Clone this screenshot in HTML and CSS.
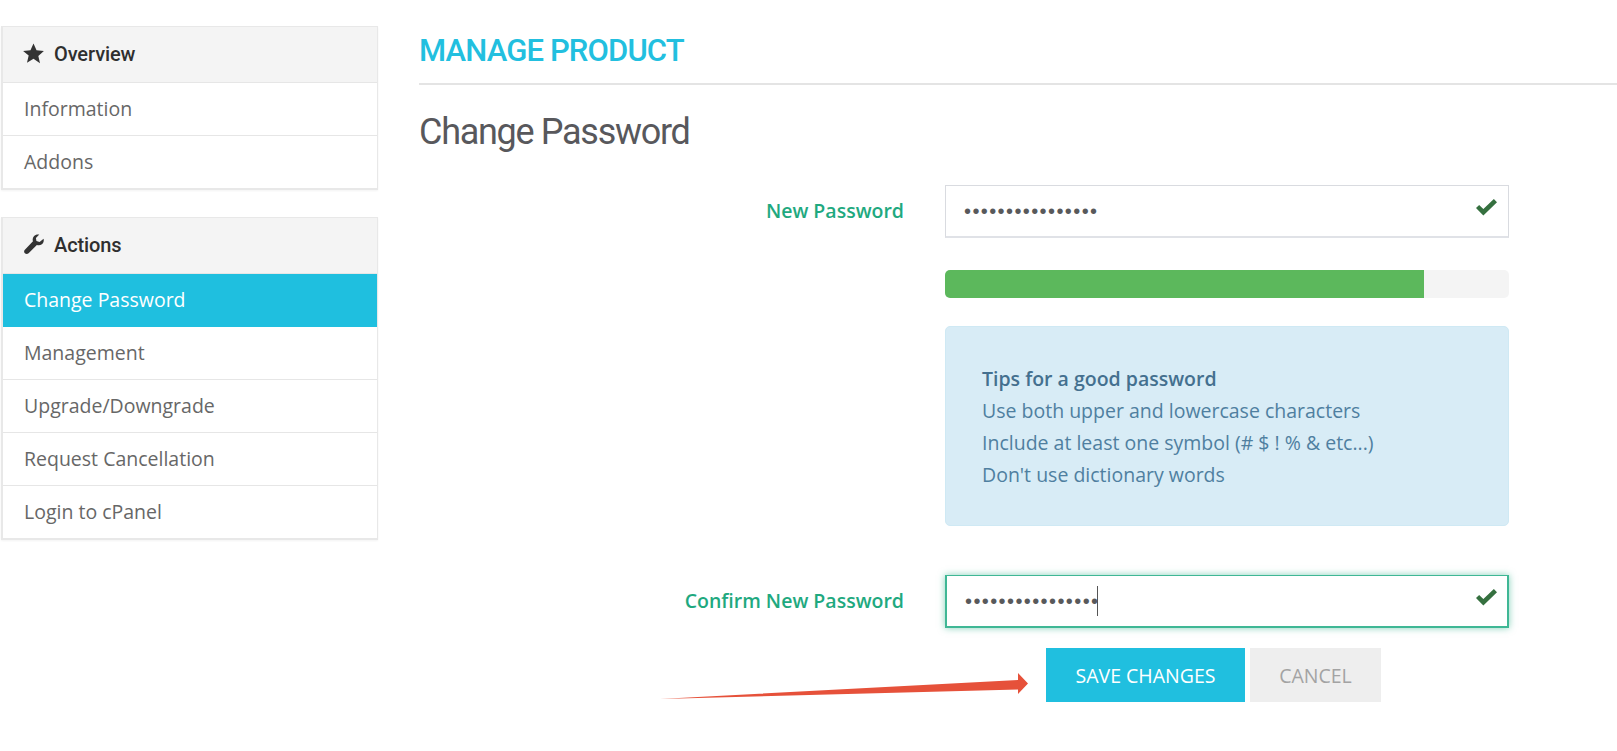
FILE: index.html
```html
<!DOCTYPE html>
<html lang="en">
<head>
  <meta charset="UTF-8" />
  <meta name="viewport" content="width=device-width, initial-scale=1" />
  <title>Manage Product</title>
  <link rel="stylesheet" href="styles.css">
</head>
<body>

  <div class="page">
    <!-- Sidebar -->
    <aside class="sidebar">
      <div class="panel">
        <div class="panel-head">
          <svg class="panel-icon" viewBox="0 0 20 20"><path d="M10 0.5l2.9 6.5 7 .7-5.3 4.6 1.6 6.9L10 15.1l-6.2 3.6 1.6-6.9L.1 7.7l7-.7z"/></svg>
          Overview
        </div>
        <a class="panel-item">Information</a>
        <a class="panel-item">Addons</a>
      </div>

      <div class="panel">
        <div class="panel-head">
          <svg class="panel-icon" viewBox="0 0 20 20"><path d="M19.6 4.6c.5 2.2-.1 4-1.600 5.200-1.400 1.100-3.100 1.300-4.800.7L5.300 18.300c-1 1-2.500 1-3.500.1-1-1-1-2.500 0-3.500l7.700-7.900c-.6-1.800-.3-3.500.9-4.900C11.600.7 13.400.1 15.500.5L12.300 3.700l.5 3 3 .9z"/></svg>
          Actions
        </div>
        <a class="panel-item active">Change Password</a>
        <a class="panel-item">Management</a>
        <a class="panel-item">Upgrade/Downgrade</a>
        <a class="panel-item">Request Cancellation</a>
        <a class="panel-item">Login to cPanel</a>
      </div>
    </aside>

    <!-- Main content -->
    <main class="content">
      <h1 class="page-title">MANAGE PRODUCT</h1>
      <h2 class="section-title">Change Password</h2>

      <form class="pw-form">
        <div class="form-row">
          <label class="form-label" for="newPassword">New Password</label>
          <div class="field">
            <input type="password" id="newPassword" class="form-input" value="1234567890123456" />
            <svg class="field-check" viewBox="0 0 20 16"><path d="M0 8.500l3-3 4 4L17 0l3 3L7 15.500z"/></svg>
          </div>
        </div>

        <div class="form-row meter-row">
          <div class="meter"><div class="meter-bar" style="width: 85%"></div></div>
        </div>

        <div class="form-row tips-row">
          <div class="tips">
            <strong>Tips for a good password</strong><br>
            Use both upper and lowercase characters<br>
            Include at least one symbol (# $ ! % &amp; etc...)<br>
            Don't use dictionary words
          </div>
        </div>

        <div class="form-row confirm-row">
          <label class="form-label" for="confirmPassword">Confirm New Password</label>
          <div class="field">
            <input type="password" id="confirmPassword" class="form-input focused" value="1234567890123456" />
            <span class="caret"></span>
            <svg class="field-check" viewBox="0 0 20 16"><path d="M0 8.500l3-3 4 4L17 0l3 3L7 15.500z"/></svg>
          </div>
        </div>

        <div class="form-actions">
          <button type="button" class="btn btn-save">SAVE CHANGES</button>
          <button type="button" class="btn btn-cancel">CANCEL</button>
        </div>
      </form>
    </main>
  </div>

  <!-- Annotation arrow drawn over the page -->
  <svg class="arrow" viewBox="0 0 370 32"><path d="M0 27L358 8V1L368 11.500 358 22V17.500z"/></svg>

</body>
</html>
```

FILE: styles.css
```css
* {
  box-sizing: border-box;
}

body {
  margin: 0;
  font-family: "Open Sans", Arial, sans-serif;
  background: #fff;
  color: #58595b;
  overflow: hidden;
}

.page {
  display: flex;
  gap: 41px;
  padding: 26px 0 0 1px;
  height: 751px;
}

/* Sidebar */
.sidebar {
  width: 377px;
  flex-shrink: 0;
}

.panel {
  border: 2px solid #e8e8e8;
  border-top-width: 1px;
  border-right-width: 1px;
  margin-bottom: 27px;
  box-shadow: 0 1px 2px rgba(0,0,0,0.05);
}

.panel-head {
  display: flex;
  align-items: center;
  gap: 10px;
  height: 56px;
  padding: 0 0 2px 20px;
  background: #f4f4f4;
  border-bottom: 1px solid #e6e6e6;
  font-family: Roboto, Arial, sans-serif;
  font-size: 20px;
  font-weight: 500;
  letter-spacing: -0.1px;
  color: #2f2f2f;
}

.panel-icon {
  width: 21px;
  height: 21px;
  fill: #333;
}

.panel-item {
  display: block;
  height: 53px;
  line-height: 52px;
  padding-left: 21px;
  font-size: 19.5px;
  color: #676767;
  border-bottom: 1px solid #e6e6e6;
}

.panel-item:last-child {
  border-bottom: none;
  height: 52px;
}

.panel-item.active {
  background: #1fbfdf;
  color: #fff;
  border-bottom: none;
}

/* Main */
.content {
  flex: 1;
  min-width: 0;
}

.page-title {
  margin: 0;
  height: 59px;
  line-height: 49px;
  font-family: Roboto, Arial, sans-serif;
  font-size: 31px;
  font-weight: 500;
  color: #22bfdf;
  letter-spacing: -0.85px;
  border-bottom: 2px solid #e4e4e4;
}

.section-title {
  margin: 0;
  height: 100px;
  padding: 23px 0 0 0;
  font-family: Roboto, Arial, sans-serif;
  font-size: 36px;
  line-height: 48px;
  font-weight: 400;
  color: #58585c;
  letter-spacing: -1.3px;
}

/* Form */
.form-row {
  display: flex;
  align-items: center;
  justify-content: flex-end;
  gap: 41px;
  width: 1090px;
}

.form-label {
  padding-bottom: 2px;
  font-size: 19.5px;
  font-weight: 600;
  color: #1fa97f;
}

.field {
  position: relative;
  width: 564px;
}

.form-input {
  display: block;
  width: 100%;
  height: 53px;
  padding: 0 18px;
  border: 1px solid #d9dbe0;
  border-bottom: 2px solid #e0e2e7;
  background: #fff;
  font-family: Arial, "Liberation Sans", sans-serif;
  font-size: 20px;
  letter-spacing: 1.4px;
  color: #58595b;
  outline: none;
}

.form-input.focused {
  border: 2px solid #3fb795;
  border-top-width: 1px;
  box-shadow: 0 0 7px rgba(31,169,127,0.55);
}

.caret {
  position: absolute;
  left: 152px;
  top: 11px;
  width: 1px;
  height: 30px;
  background: #555;
}

.field-check {
  position: absolute;
  right: 12px;
  top: 14px;
  width: 21px;
  height: 17px;
  fill: #35703f;
}

.meter-row {
  margin-top: 32px;
}

.meter {
  width: 564px;
  height: 28px;
  background: #f4f4f4;
  border-radius: 5px;
  overflow: hidden;
}

.meter-bar {
  height: 100%;
  background: #5cb85c;
}

.tips-row {
  margin-top: 28px;
}

.tips {
  width: 564px;
  height: 200px;
  padding: 36px 36px;
  background: #d8ecf6;
  border: 1px solid #cfe9f4;
  border-radius: 5px;
  font-size: 19.5px;
  line-height: 32px;
  color: #4f7fa0;
}

.tips strong {
  font-weight: 600;
  color: #44708f;
}

.confirm-row {
  margin-top: 49px;
}

.form-actions {
  display: flex;
  gap: 5px;
  margin: 20px 0 0 627px;
}

.btn {
  height: 54px;
  border: none;
  font-family: "Open Sans", Arial, sans-serif;
  font-size: 19.5px;
  cursor: pointer;
}

.btn-save {
  width: 199px;
  background: #20bfdf;
  color: #fff;
}

.btn-cancel {
  width: 131px;
  background: #eeeeee;
  color: #a3a3a3;
}

/* Annotation */
.arrow {
  position: absolute;
  left: 660px;
  top: 672px;
  width: 370px;
  height: 32px;
  fill: #e6513a;
}
```
